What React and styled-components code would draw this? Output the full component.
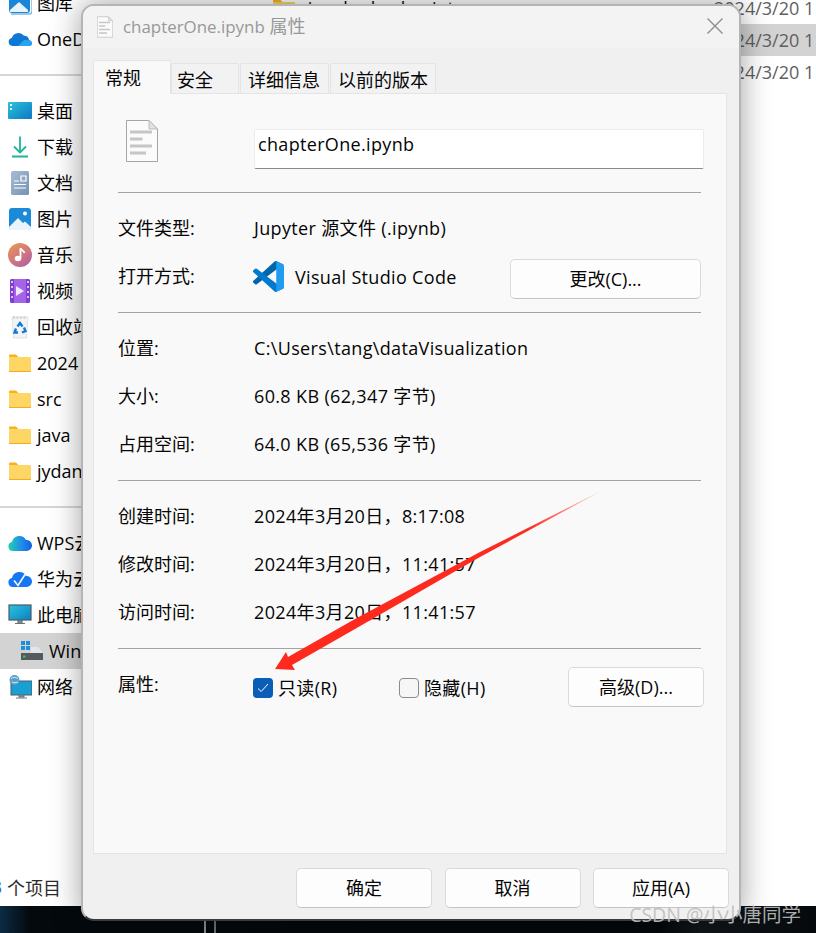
import React from 'react';
import styled, { createGlobalStyle } from 'styled-components';

const GlobalStyle = createGlobalStyle`
  html, body {
    margin: 0;
    padding: 0;
    background: #fff;
  }
  * {
    box-sizing: border-box;
  }
`;

const FONT = `"Open Sans", "Noto Sans CJK SC", sans-serif`;

const Desktop = styled.div`
  position: relative;
  width: 816px;
  height: 933px;
  overflow: hidden;
  display: flex;
  flex-direction: column;
  font-family: ${FONT};
  font-size: 18px;
  color: #050505;
  background: linear-gradient(90deg, #0c2c44 0, #04090d 30px, #04080b 660px, #12171b 700px, #05090c 100%);
`;

const Explorer = styled.div`
  height: 906px;
  background: #fff;
  display: flex;
  flex-direction: column;
  overflow: hidden;
`;

const ExplorerMain = styled.div`
  flex: 1;
  display: flex;
  min-height: 0;
`;

const Sidebar = styled.nav`
  width: 244px;
  margin-top: -15px;
  flex-shrink: 0;
`;

const NavItem = styled.div`
  height: 36px;
  display: flex;
  align-items: center;
  gap: 5px;
  padding-left: ${(p) => (p.$indent ? 20 : 8)}px;
  background: ${(p) => (p.$selected ? '#d3d3d3' : 'transparent')};
  white-space: nowrap;
  overflow: hidden;
  line-height: 1;
`;

const NavDivider = styled.div`
  height: 36px;
  display: flex;
  align-items: center;

  &::after {
    content: '';
    width: 100%;
    height: 2px;
    background: #d6d6d6;
  }
`;

const FileList = styled.div`
  flex: 1;
  margin-top: -8px;
`;

const FileRow = styled.div`
  height: 32px;
  display: grid;
  grid-template-columns: 31px 411px auto;
  align-items: center;
  padding-left: 28px;
  white-space: nowrap;
  overflow: hidden;
  background: ${(p) => (p.$selected ? '#d3d3d3' : 'transparent')};
`;

const FileDate = styled.span`
  color: #5f5f5f;
`;

const StatusBar = styled.div`
  height: 36px;
  margin-left: -12px;
  padding-bottom: 2px;
  display: flex;
  align-items: center;
  color: #2c2c2c;
  white-space: nowrap;
  flex-shrink: 0;
`;

const StatusCount = styled.span`
  width: 19px;
  padding-right: 5px;
  text-align: right;
  color: #1a6fb5;
`;

const Taskbar = styled.div`
  position: relative;
  flex: 1;
`;

const WallpaperStreak = styled.div`
  position: absolute;
  left: 204px;
  bottom: 0;
  width: 12px;
  height: 14px;
  border-left: 2px solid #8d9094;
  border-right: 2px solid #6f7275;
`;

/* the dialog sits on the desktop like any other window */
const Dialog = styled.section`
  position: absolute;
  left: 81px;
  top: 4px;
  width: 660px;
  height: 917px;
  display: flex;
  flex-direction: column;
  background: #f0f0f0;
  border: 2px solid #b4b4b4;
  border-bottom-color: #3b3b3b;
  border-radius: 13px;
  box-shadow: 0 0 30px rgba(0, 0, 0, 0.38);
  overflow: hidden;
`;

const TitleBar = styled.header`
  height: 42px;
  padding: 0 16px 0 14px;
  display: flex;
  align-items: center;
  gap: 10px;
  background: #f3f3f3;
  color: #989898;
  flex-shrink: 0;
`;

const TitleText = styled.span`
  margin-top: -5px;
  white-space: nowrap;
`;

const TitleName = styled.span`
  font-size: 16.9px;
`;

const CloseButton = styled.div`
  margin-left: auto;
  display: flex;
  margin-top: -3px;
`;

const Tabs = styled.div`
  margin: 12px 0 0 10px;
  height: 34px;
  display: flex;
  align-items: flex-end;
  flex-shrink: 0;
`;

const Tab = styled.div`
  position: relative;
  z-index: ${(p) => (p.$active ? 2 : 0)};
  width: ${(p) => p.$width}px;
  height: ${(p) => (p.$active ? 34 : 31)}px;
  margin-right: ${(p) => (p.$active ? 0 : 1)}px;
  padding-left: ${(p) => p.$pad}px;
  padding-bottom: ${(p) => (p.$active ? 1 : 0)}px;
  display: flex;
  align-items: center;
  background: ${(p) => (p.$active ? '#f9f9f9' : '#f2f2f2')};
  border: 1px solid #e4e4e4;
  border-bottom: ${(p) => (p.$active ? 'none' : '1px solid #e4e4e4')};
  border-radius: 2px 2px 0 0;
  white-space: nowrap;
`;

const Panel = styled.div`
  flex: 1;
  margin: -1px 12px 0 10px;
  padding: 0 25px 0 24px;
  background: #f9f9f9;
  border: 1px solid #e4e4e4;
`;

const HeadRow = styled.div`
  height: 98px;
  padding-top: 26px;
  display: grid;
  grid-template-columns: 136px 1fr;
  align-items: start;
`;

const FileIconSlot = styled.div`
  padding-left: 8px;
  display: flex;
`;

const NameInput = styled.div`
  height: 40px;
  margin: 9px -3px 0 0;
  padding-left: 3px;
  background: #fff;
  border: 1px solid #ececec;
  border-bottom: 1.5px solid #8a8a8a;
  border-radius: 2px;
  line-height: 28px;
  letter-spacing: 0.33px;
`;

const Divider = styled.div`
  height: 1px;
  background: #a3a3a3;
`;

const Section = styled.div`
  padding: 12px 0 11px;
  display: grid;
  grid-template-columns: 136px 1fr;
  grid-auto-rows: 48px;
  align-items: center;
`;

const Label = styled.div`
  line-height: 1;
  margin-top: -3px;
  white-space: nowrap;
`;

const Value = styled.div`
  line-height: 1;
  margin-top: -3px;
  white-space: nowrap;
  letter-spacing: 0.35px;
`;

const OpenWith = styled.div`
  display: flex;
  align-items: center;
  gap: 11px;
  margin-left: -1px;
  margin-top: -1px;
  line-height: 1;
  white-space: nowrap;
`;

const AppName = styled.span`
  letter-spacing: 0.33px;
`;

const OptionsRow = styled.div`
  display: flex;
  align-items: center;
  margin-left: -1px;
`;

const CheckOption = styled.div`
  width: ${(p) => p.$width}px;
  display: flex;
  align-items: center;
  gap: 5px;
  margin-top: 5px;
  line-height: 1;
  letter-spacing: 0.33px;
`;

const CheckBox = styled.span`
  width: 20px;
  height: 20px;
  border-radius: 4px;
  display: flex;
  align-items: center;
  justify-content: center;
  background: ${(p) => (p.$checked ? '#0a5eb5' : '#f6f6f6')};
  border: ${(p) => (p.$checked ? 'none' : '1.5px solid #8b8b8b')};
`;

const Button = styled.button`
  width: ${(p) => p.$width || 136}px;
  height: 40px;
  flex-shrink: 0;
  padding: 0;
  font: inherit;
  line-height: 1;
  color: #050505;
  background: #fdfdfd;
  border: 1px solid #dadada;
  border-bottom-color: #c4c4c4;
  border-radius: 5px;
`;

const ChangeButton = styled(Button)`
  margin: 4px 0 0 auto;
`;

const AdvancedButton = styled(Button)`
  margin: 3px -3px 0 auto;
`;

const Footer = styled.footer`
  height: 65px;
  padding: 14px 10px 0 0;
  display: flex;
  justify-content: flex-end;
  gap: 12.5px;
  flex-shrink: 0;
`;

const ArrowOverlay = styled.svg`
  position: absolute;
  left: 0;
  top: 0;
  pointer-events: none;
`;

const Watermark = styled.div`
  position: absolute;
  right: 15px;
  top: 899px;
  font-size: 19.5px;
  color: rgba(190, 190, 190, 0.92);
  white-space: nowrap;
`;

const Ico = ({ children, size = 24, vb = '0 0 24 24' }) => (
  <svg width={size} height={size} viewBox={vb} style={{ flexShrink: 0 }}>
    {children}
  </svg>
);

const GalleryIcon = () => (
  <Ico>
    <rect x="1" y="1" width="21" height="21" rx="3" fill="#1a86d8" />
    <path d="M2 19 11 11l9 8v2H2Z" fill="#e9f3fb" />
    <path d="M3 23h18a3 3 0 0 0 3-3V6" fill="none" stroke="#7fb4e0" strokeWidth="1.4" />
  </Ico>
);

const OneDriveIcon = () => (
  <Ico>
    <path d="M4.500 19a4 4 0 0 1-.7-7.900A7 7 0 0 1 16 8.800 4.500 4.500 0 0 1 21 13c1.800.6 3 1.800 3 3.300 0 1.700-1.300 2.700-3 2.700Z" fill="#0f78d4" />
    <path d="M10 19 16 13l5 .2c1.800.6 3 1.800 3 3.100 0 1.700-1.300 2.700-3 2.700Z" fill="#2aa4ee" />
  </Ico>
);

const DesktopIcon = () => (
  <Ico>
    <defs>
      <linearGradient id="desk" x1="0" y1="0" x2="1" y2="1">
        <stop offset="0" stopColor="#2cc3dc" />
        <stop offset="1" stopColor="#0b78c0" />
      </linearGradient>
    </defs>
    <rect x="0" y="3" width="24" height="17" rx="1" fill="url(#desk)" />
    <rect x="2" y="5" width="2" height="2" fill="#fff" />
    <rect x="2" y="9" width="2" height="2" fill="#d5f3f8" />
  </Ico>
);

const DownloadIcon = () => (
  <Ico>
    <path d="M12 1.500V17M6 11.500l6 6 6-6" fill="none" stroke="#1fb39a" strokeWidth="1.800" />
    <rect x="4" y="20.500" width="16" height="2" fill="#1fb39a" />
  </Ico>
);

const DocumentsIcon = () => (
  <Ico>
    <defs>
      <linearGradient id="docs" x1="0" y1="0" x2="1" y2="1">
        <stop offset="0" stopColor="#a8bdd4" />
        <stop offset="1" stopColor="#7592b3" />
      </linearGradient>
    </defs>
    <rect x="3" y="0" width="18" height="24" rx="1.500" fill="url(#docs)" />
    <path d="M6 10h5M13 5h5v5h-5ZM6 13.500h12M6 17h12" stroke="#fff" strokeWidth="1.200" fill="none" />
  </Ico>
);

const PicturesIcon = () => (
  <Ico>
    <rect x="1" y="1" width="22" height="22" rx="3" fill="#1b8ad8" />
    <path d="M1 20 10 11l5 5 2-1.500L23 20v1a2 2 0 0 1-2 2H3a2 2 0 0 1-2-2Z" fill="#eaf4fb" />
    <circle cx="17" cy="6.500" r="2" fill="#fff" />
  </Ico>
);

const MusicIcon = () => (
  <Ico>
    <defs>
      <linearGradient id="music" x1="0" y1="0" x2="0.700" y2="1">
        <stop offset="0" stopColor="#f09a4d" />
        <stop offset="1" stopColor="#b7609e" />
      </linearGradient>
    </defs>
    <circle cx="12" cy="12" r="12" fill="url(#music)" />
    <path d="M12.500 5v10" stroke="#fff" strokeWidth="1.800" />
    <path d="M12.500 5c.5 2.500 3.500 2.500 4 5" stroke="#fff" strokeWidth="1.600" fill="none" />
    <ellipse cx="10" cy="15.500" rx="3.300" ry="2.800" fill="#fff" />
  </Ico>
);

const VideoIcon = () => (
  <Ico>
    <rect x="2" y="0" width="20" height="24" rx="1.500" fill="#7b3fd3" />
    <rect x="6" y="0" width="12" height="24" fill="#a265e8" />
    <path d="M3 3h2M3 8h2M3 13h2M3 18h2M19 3h2M19 8h2M19 13h2M19 18h2" stroke="#f4b6e8" strokeWidth="2" />
    <path d="M8 7v10l8-5Z" fill="#efe8fb" />
  </Ico>
);

const RecycleIcon = () => (
  <Ico>
    <path d="M4 2h16l-1.500 21h-13Z" fill="#f1f3f5" stroke="#dfe3e6" strokeWidth="1" />
    <path d="M5 2.500h14" stroke="#c9ced2" strokeWidth="2" strokeDasharray="2 1.500" />
    <path d="M9.500 11.500 12 8l2.500 3.500M16 12.500l1.500 3.500-3.500 1.500M10 17.500H6.500l1.500-4" fill="none" stroke="#1578d6" strokeWidth="2.400" />
  </Ico>
);

const FolderIcon = () => (
  <Ico>
    <path d="M1 4.500A1 1 0 0 1 2 3.500h6l2.500 2.500H1Z" fill="#f9b21c" />
    <rect x="1" y="6" width="22" height="15" rx="1" fill="#fdd666" />
    <rect x="1" y="20" width="22" height="1" fill="#f2ae1c" />
  </Ico>
);

const WpsCloudIcon = () => (
  <Ico>
    <defs>
      <linearGradient id="wps" x1="0" y1="0" x2="1" y2="0">
        <stop offset="0" stopColor="#22d0b0" />
        <stop offset="0.600" stopColor="#1f88ee" />
        <stop offset="1" stopColor="#1560dd" />
      </linearGradient>
    </defs>
    <path d="M5 20a4.500 4.500 0 0 1-1-8.900A7.500 7.500 0 0 1 18 9a5.500 5.500 0 0 1 1 11Z" fill="url(#wps)" />
  </Ico>
);

const HuaweiCloudIcon = () => (
  <Ico>
    <path d="M5 20a4.500 4.500 0 0 1-1-8.900A7.500 7.500 0 0 1 18 9a5.500 5.500 0 0 1 1 11Z" fill="#1677f2" />
    <path d="M6 13.500l4 5 7-11" fill="none" stroke="#fff" strokeWidth="1.600" />
  </Ico>
);

const MonitorIcon = () => (
  <Ico>
    <defs>
      <linearGradient id="pc" x1="0" y1="0" x2="1" y2="1">
        <stop offset="0" stopColor="#2bc4dc" />
        <stop offset="1" stopColor="#0c7fc4" />
      </linearGradient>
    </defs>
    <rect x="1" y="2" width="22" height="15" fill="url(#pc)" stroke="#4d5b66" strokeWidth="1.200" />
    <path d="M10 17.500h4v2.500h-4ZM7 20.500h10" stroke="#66727c" strokeWidth="1.200" fill="#8b959c" />
  </Ico>
);

const DriveIcon = () => (
  <Ico>
    <path d="M11 8h7l5 6H11Z" fill="#e2e6ea" />
    <rect x="1" y="14" width="22" height="7" fill="#555a5e" />
    <rect x="3" y="16.500" width="2.500" height="2" fill="#34d24a" />
    <path d="M1 2h4v4H1ZM6 2h4v4H6ZM1 7h4v4H1ZM6 7h4v4H6Z" fill="#1c8ee0" />
  </Ico>
);

const NetworkIcon = () => (
  <Ico>
    <rect x="3" y="6" width="21" height="14" fill="#1a9fd4" stroke="#4d5b66" strokeWidth="1" />
    <path d="M11 20h5v2h-5ZM8 23h11" stroke="#66727c" strokeWidth="1" fill="#8b959c" />
    <circle cx="6.500" cy="5" r="5" fill="#5e9fca" />
    <path d="M3 3.500c2-1.500 5-1.500 7 0M4 7c2 1 4 1 6 0" stroke="#d9ecf7" strokeWidth="1" fill="none" />
  </Ico>
);

const DocGlyph = ({ width, height }) => (
  <svg width={width} height={height} viewBox="0 0 32 42">
    <path d="M.500.500H23L31.500 9V41.500H.500Z" fill="#fbfbfb" stroke="#a5a5a5" />
    <path d="M23 .500V9h8.500Z" fill="#e2e2e2" stroke="#bdbdbd" />
    <path d="M4 12h22M4 19h12.500M4 26h22M4 33h16" stroke="#c6c6c6" strokeWidth="3" />
  </svg>
);

const VsCodeIcon = () => (
  <svg width="31" height="31" viewBox="0 0 100 100" style={{ flexShrink: 0 }}>
    <path d="M96.500 10.800 75.900.900a6.200 6.200 0 0 0-7.100 1.200L1.400 63.600a4.200 4.200 0 0 0 0 6.200l5.500 5a4.200 4.200 0 0 0 5.300.2l81.200-61.600c2.700-2 6.600-.1 6.600 3.300v-.2a6.200 6.200 0 0 0-3.500-5.700Z" fill="#0065a9" />
    <path d="M96.500 89.200 75.900 99.100a6.200 6.200 0 0 1-7.100-1.200L1.400 36.400a4.200 4.200 0 0 1 0-6.200l5.500-5a4.200 4.200 0 0 1 5.300-.2l81.200 61.600c2.700 2 6.600.1 6.600-3.300v.2a6.200 6.200 0 0 1-3.500 5.700Z" fill="#007acc" />
    <path d="M75.900 99.100a6.200 6.200 0 0 1-7.100-1.200c2.300 2.300 6.200.7 6.200-2.600V4.700c0-3.300-3.900-4.900-6.200-2.600a6.200 6.200 0 0 1 7.100-1.200l20.600 9.900a6.200 6.200 0 0 1 3.500 5.600v67.200a6.200 6.200 0 0 1-3.500 5.600L75.900 99.100Z" fill="#1f9cf0" />
  </svg>
);

const navTop = [
  { icon: <GalleryIcon />, label: '图库' },
  { icon: <OneDriveIcon />, label: 'OneDrive' },
];

const navPinned = [
  { icon: <DesktopIcon />, label: '桌面' },
  { icon: <DownloadIcon />, label: '下载' },
  { icon: <DocumentsIcon />, label: '文档' },
  { icon: <PicturesIcon />, label: '图片' },
  { icon: <MusicIcon />, label: '音乐' },
  { icon: <VideoIcon />, label: '视频' },
  { icon: <RecycleIcon />, label: '回收站' },
  { icon: <FolderIcon />, label: '2024' },
  { icon: <FolderIcon />, label: 'src' },
  { icon: <FolderIcon />, label: 'java' },
  { icon: <FolderIcon />, label: 'jydan' },
];

const navDrives = [
  { icon: <WpsCloudIcon />, label: 'WPS云盘' },
  { icon: <HuaweiCloudIcon />, label: '华为云盘' },
  { icon: <MonitorIcon />, label: '此电脑' },
  { icon: <DriveIcon />, label: 'Windows', indent: true, selected: true },
  { icon: <NetworkIcon />, label: '网络' },
];

const renderNav = (items) =>
  items.map((item) => (
    <NavItem key={item.label} $indent={item.indent} $selected={item.selected}>
      {item.icon}
      <span>{item.label}</span>
    </NavItem>
  ));

const App = () => (
  <Desktop>
    <GlobalStyle />
    <Explorer>
      <ExplorerMain>
        <Sidebar>
          {renderNav(navTop)}
          <NavDivider />
          {renderNav(navPinned)}
          <NavDivider />
          {renderNav(navDrives)}
        </Sidebar>
        <FileList>
          <FileRow>
            <FolderIcon />
            <span>.ipynb_checkpoints</span>
            <FileDate>2024/3/20 11:41</FileDate>
          </FileRow>
          <FileRow $selected>
            <span />
            <span />
            <FileDate>2024/3/20 11:41</FileDate>
          </FileRow>
          <FileRow>
            <span />
            <span />
            <FileDate>2024/3/20 11:41</FileDate>
          </FileRow>
        </FileList>
      </ExplorerMain>
      <StatusBar>
        <StatusCount>3</StatusCount>
        <span>个项目</span>
      </StatusBar>
    </Explorer>
    <Taskbar>
      <WallpaperStreak />
    </Taskbar>

    <Dialog>
      <TitleBar>
        <DocGlyph width={16} height={22} />
        <TitleText>
          <TitleName>chapterOne.ipynb</TitleName> 属性
        </TitleText>
        <CloseButton>
          <svg width="16" height="16" viewBox="0 0 16 16">
            <path d="M.5.500l15 15M15.500.500l-15 15" stroke="#8e8e8e" strokeWidth="1.400" fill="none" />
          </svg>
        </CloseButton>
      </TitleBar>

      <Tabs>
        <Tab $active $width={78} $pad={11}>常规</Tab>
        <Tab $width={68} $pad={5}>安全</Tab>
        <Tab $width={89} $pad={7}>详细信息</Tab>
        <Tab $width={106} $pad={7}>以前的版本</Tab>
      </Tabs>

      <Panel>
        <HeadRow>
          <FileIconSlot>
            <DocGlyph width={32} height={42} />
          </FileIconSlot>
          <NameInput>chapterOne.ipynb</NameInput>
        </HeadRow>
        <Divider />
        <Section>
          <Label>文件类型:</Label>
          <Value>Jupyter 源文件 (.ipynb)</Value>
          <Label>打开方式:</Label>
          <OpenWith>
            <VsCodeIcon />
            <AppName>Visual Studio Code</AppName>
            <ChangeButton $width={191}>更改(C)...</ChangeButton>
          </OpenWith>
        </Section>
        <Divider />
        <Section>
          <Label>位置:</Label>
          <Value>C:\Users\tang\dataVisualization</Value>
          <Label>大小:</Label>
          <Value>60.8 KB (62,347 字节)</Value>
          <Label>占用空间:</Label>
          <Value>64.0 KB (65,536 字节)</Value>
        </Section>
        <Divider />
        <Section>
          <Label>创建时间:</Label>
          <Value>2024年3月20日，8:17:08</Value>
          <Label>修改时间:</Label>
          <Value>2024年3月20日，11:41:57</Value>
          <Label>访问时间:</Label>
          <Value>2024年3月20日，11:41:57</Value>
        </Section>
        <Divider />
        <Section>
          <Label>属性:</Label>
          <OptionsRow>
            <CheckOption $width={146}>
              <CheckBox $checked>
                <svg width="12" height="10" viewBox="0 0 12 10">
                  <path d="M1 5.500l3.200 3L11 1" stroke="#fff" strokeWidth="1" fill="none" />
                </svg>
              </CheckBox>
              <span>只读(R)</span>
            </CheckOption>
            <CheckOption $width={120}>
              <CheckBox />
              <span>隐藏(H)</span>
            </CheckOption>
            <AdvancedButton>高级(D)...</AdvancedButton>
          </OptionsRow>
        </Section>
      </Panel>

      <Footer>
        <Button>确定</Button>
        <Button>取消</Button>
        <Button>应用(A)</Button>
      </Footer>
    </Dialog>

    <ArrowOverlay width="816" height="933" viewBox="0 0 816 933">
      <defs>
        <linearGradient id="arrowFade" gradientUnits="userSpaceOnUse" x1="605" y1="489" x2="530" y2="532">
          <stop offset="0" stopColor="#ffe4e1" />
          <stop offset="1" stopColor="#ff2a1e" />
        </linearGradient>
      </defs>
      <path d="M605 489 480 552 355 619 288 657 286 652 275 669 295 670 292 665 355 629 480 557Z" fill="url(#arrowFade)" />
    </ArrowOverlay>

    <Watermark>CSDN @小小唐同学</Watermark>
  </Desktop>
);

export default App;
